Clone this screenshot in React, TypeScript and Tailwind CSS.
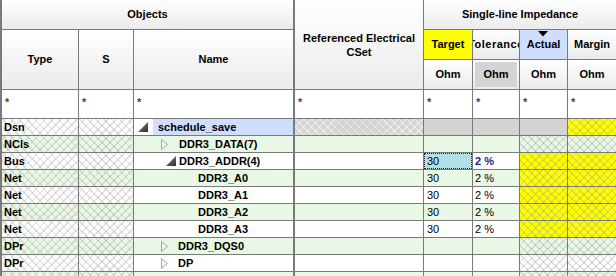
import clsx from "clsx";
import type { ReactNode } from "react";

// grid lines and fills shared by header and body
const line = "border-b border-r border-[#7a7a7a]";
const hatch =
  "bg-[image:repeating-linear-gradient(45deg,rgba(150,150,150,0.32)_0_1px,transparent_1px_5.6px),repeating-linear-gradient(-45deg,rgba(150,150,150,0.32)_0_1px,transparent_1px_5.6px)]";
const hatchLight =
  "bg-[image:repeating-linear-gradient(45deg,rgba(255,255,255,0.45)_0_1px,transparent_1px_5.6px),repeating-linear-gradient(-45deg,rgba(255,255,255,0.45)_0_1px,transparent_1px_5.6px)]";
const headBg = "bg-linear-to-b from-white to-[#ebebeb]";
const GREEN = "bg-[#e8f8e4]";
const WHITE = "bg-white";
const YELLOW = "bg-[#ffff00]";
const GRAY = "bg-[#d4d4d4]";

type Fill = "white" | "green" | "yellow" | "gray";

const fillClass = (fill: Fill, hatched?: boolean) =>
  clsx(
    fill === "white" && WHITE,
    fill === "green" && GREEN,
    fill === "yellow" && YELLOW,
    fill === "gray" && GRAY,
    hatched && (fill === "gray" ? hatchLight : hatch)
  );

function Cell({
  className,
  children,
  last,
  divider,
}: {
  className?: string;
  children?: ReactNode;
  last?: boolean;
  divider?: boolean;
}) {
  return (
    <div
      className={clsx(
        line,
        last && "border-r-0",
        divider && "border-r-2",
        "flex items-center overflow-hidden whitespace-nowrap",
        className
      )}
    >
      {children}
    </div>
  );
}

function Head({
  className,
  children,
  last,
  divider,
}: {
  className?: string;
  children?: ReactNode;
  last?: boolean;
  divider?: boolean;
}) {
  return (
    <Cell
      last={last}
      divider={divider}
      className={clsx("justify-center text-center font-bold text-[11px] text-black", className)}
    >
      {children}
    </Cell>
  );
}

function Open() {
  return (
    <svg width="10" height="10" viewBox="0 0 10 10" className="shrink-0">
      <defs>
        <linearGradient id="tri" x1="0" y1="0" x2="1" y2="1">
          <stop offset="0" stopColor="#8a8a8a" />
          <stop offset="1" stopColor="#2e2e2e" />
        </linearGradient>
      </defs>
      <polygon points="10,0 10,10 0,10" fill="url(#tri)" />
    </svg>
  );
}

function Closed() {
  return (
    <svg width="7" height="11" viewBox="0 0 7 11" className="shrink-0">
      <polygon points="0.5,0.5 6.5,5.5 0.5,10.5" fill="#f4f4f4" stroke="#a6a6a6" />
    </svg>
  );
}

type Row = {
  type: string;
  fill: "white" | "green";
  name?: ReactNode;
  ref?: Fill;
  refHatch?: boolean;
  imp?: Fill;
  target?: string;
  tol?: string;
  focus?: boolean;
  act: Fill;
  marg: Fill;
};

const rows: Row[] = [
  {
    type: "Dsn",
    fill: "white",
    name: (
      <div className="flex h-full w-full items-center">
        <div className="flex w-[19px] shrink-0 items-center pl-[4px]">
          <Open />
        </div>
        <div className="flex h-full flex-1 items-center bg-[#cfdeff] pl-[5px]">schedule_save</div>
      </div>
    ),
    ref: "gray",
    refHatch: true,
    imp: "gray",
    act: "gray",
    marg: "yellow",
  },
  {
    type: "NCls",
    fill: "green",
    name: (
      <div className="flex items-center pl-[27px]">
        <Closed />
        <span className="pl-[11px]">DDR3_DATA(7)</span>
      </div>
    ),
    act: "green",
    marg: "green",
  },
  {
    type: "Bus",
    fill: "white",
    name: (
      <div className="flex items-center pl-[32px]">
        <Open />
        <span className="pl-[3px]">DDR3_ADDR(4)</span>
      </div>
    ),
    target: "30",
    tol: "2 %",
    focus: true,
    act: "yellow",
    marg: "yellow",
  },
  ...["DDR3_A0", "DDR3_A1", "DDR3_A2", "DDR3_A3"].map(
    (n, i): Row => ({
      type: "Net",
      fill: i % 2 === 0 ? "green" : "white",
      name: <span className="pl-[64px]">{n}</span>,
      target: "30",
      tol: "2 %",
      act: "yellow",
      marg: "yellow",
    })
  ),
  {
    type: "DPr",
    fill: "green",
    name: (
      <div className="flex items-center pl-[27px]">
        <Closed />
        <span className="pl-[10px]">DDR3_DQS0</span>
      </div>
    ),
    act: "green",
    marg: "green",
  },
  {
    type: "DPr",
    fill: "white",
    name: (
      <div className="flex items-center pl-[27px]">
        <Closed />
        <span className="pl-[10px]">DP</span>
      </div>
    ),
    act: "white",
    marg: "white",
  },
  { type: "", fill: "green", act: "green", marg: "green" },
];

const star = (blue?: boolean) => (
  <span className={clsx("pl-[3px] pb-[3px] text-[11px] font-bold", blue ? "text-[#1f3d9c]" : "text-[#8a2a12]")}>
    *
  </span>
);

export default function App() {
  return (
    <div className="h-[276px] w-[616px] overflow-hidden border-l-2 border-[#7a7a7a] bg-white font-['Liberation_Sans',Arial,sans-serif] text-black">
      <div className="grid grid-cols-[77px_55px_161px_129px_49px_47px_48px_48px] grid-rows-[30px_30px_30px_29px] auto-rows-[17px]">
        {/* header */}
        <Head divider className={clsx("col-span-3", headBg)}>
          Objects
        </Head>
        <Head className={clsx("row-span-3 leading-[14px]", headBg)}>
          Referenced Electrical
          <br />
          CSet
        </Head>
        <Head last className={clsx("col-span-4", headBg)}>
          Single-line Impedance
        </Head>
        <Head className={clsx("row-span-2", headBg)}>Type</Head>
        <Head className={clsx("row-span-2", headBg)}>S</Head>
        <Head divider className={clsx("row-span-2", headBg)}>
          Name
        </Head>
        <Head className={YELLOW}>Target</Head>
        <Head className={headBg}>
          <span className="shrink-0 tracking-[0.5px]">Tolerance</span>
        </Head>
        <Head className="relative bg-[#cfdeff]">
          <svg width="10" height="6" viewBox="0 0 10 6" className="absolute left-[18px] top-[1px]">
            <polygon points="0,0 10,0 5,5.5" fill="#000" />
          </svg>
          Actual
        </Head>
        <Head last className={headBg}>
          Margin
        </Head>
        <Head className={headBg}>Ohm</Head>
        <Head className={headBg}>
          <div className="m-[2px] flex h-[calc(100%-4px)] w-full items-center justify-center bg-[#d4d4d4]">Ohm</div>
        </Head>
        <Head className={headBg}>Ohm</Head>
        <Head last className={headBg}>
          Ohm
        </Head>

        {/* filter row */}
        <Cell className="bg-white">{star()}</Cell>
        <Cell className="bg-white">{star()}</Cell>
        <Cell divider className="bg-white">
          {star(true)}
        </Cell>
        <Cell className="bg-white">{star()}</Cell>
        <Cell className="bg-white">{star(true)}</Cell>
        <Cell className="bg-white">{star(true)}</Cell>
        <Cell className="bg-white">{star(true)}</Cell>
        <Cell last className="bg-white">
          {star(true)}
        </Cell>

        {/* body */}
        {rows.map((r, i) => {
          const base = fillClass(r.fill);
          return [
            <Cell key={`t${i}`} className={clsx(fillClass(r.fill, true), "pl-[2px] text-[11px] font-bold")}>
              {r.type}
            </Cell>,
            <Cell key={`s${i}`} className={fillClass(r.fill, true)} />,
            <Cell key={`n${i}`} divider className={clsx(base, "text-[11px] font-bold")}>
              {r.name}
            </Cell>,
            <Cell key={`r${i}`} className={r.ref ? fillClass(r.ref, r.refHatch) : base} />,
            <Cell key={`g${i}`} className={clsx(r.imp ? fillClass(r.imp) : base, "text-[11px]")}>
              {r.target &&
                (r.focus ? (
                  <div className="flex h-full w-full items-center border border-dotted border-[#222] bg-[#b0dfe6] pl-[2px]">
                    {r.target}
                  </div>
                ) : (
                  <span className="pl-[3px]">{r.target}</span>
                ))}
            </Cell>,
            <Cell key={`o${i}`} className={clsx(r.imp ? fillClass(r.imp) : base, "text-[11px]")}>
              {r.tol && (
                <span className={clsx("pl-[2px]", r.focus && "font-bold text-[#1c1c8e]")}>{r.tol}</span>
              )}
            </Cell>,
            <Cell key={`a${i}`} className={fillClass(r.act, r.act !== "gray")} />,
            <Cell key={`m${i}`} last className={fillClass(r.marg, true)} />,
          ];
        })}
      </div>
    </div>
  );
}
